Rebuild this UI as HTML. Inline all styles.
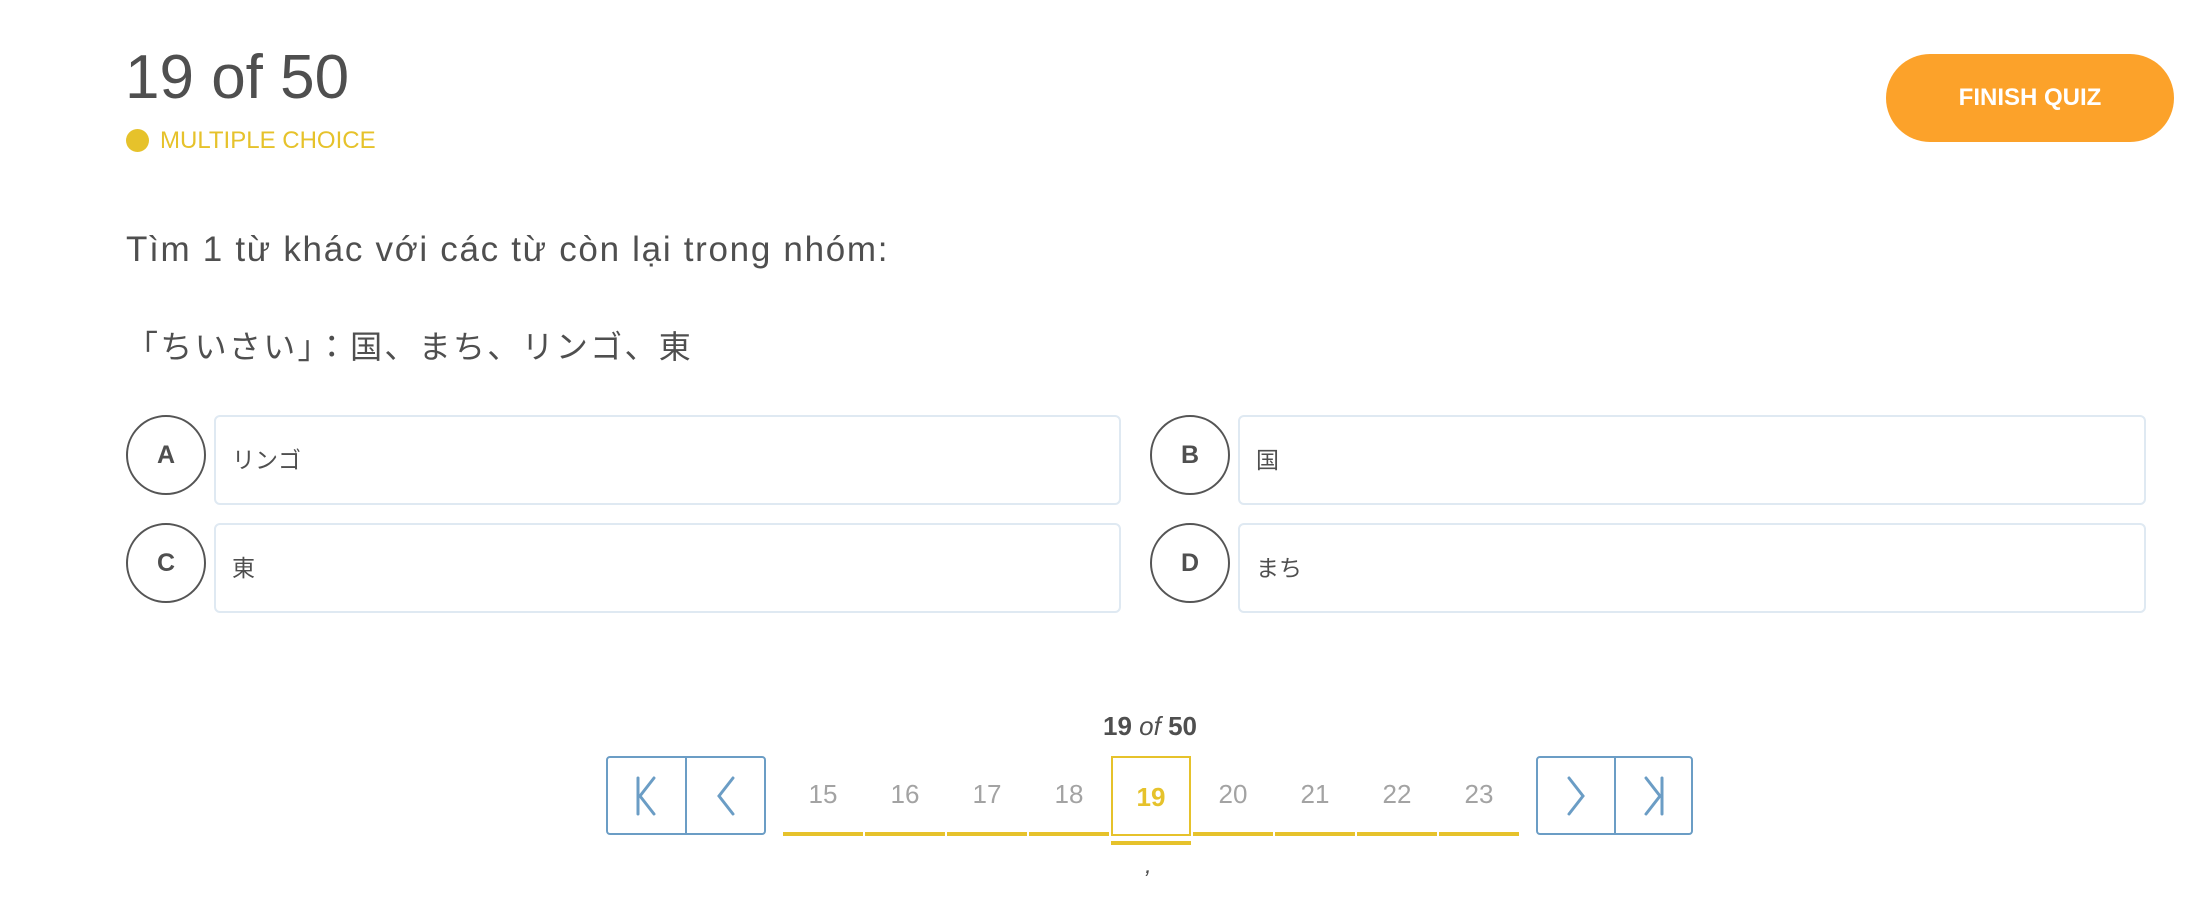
<!DOCTYPE html>
<html><head><meta charset="utf-8"><style>
*{margin:0;padding:0;box-sizing:border-box}
body{width:2195px;height:912px;background:#fff;position:relative;overflow:hidden;font-family:"Liberation Sans","Noto Sans CJK JP",sans-serif;color:#555}
.a{position:absolute}
.title{left:125px;top:42px;font-size:62px;line-height:72px;color:#4f4f4f}
.dot{left:126px;top:129px;width:23px;height:23px;border-radius:50%;background:#e6c22b}
.mc{left:160px;top:128px;font-size:24px;line-height:26px;color:#e6c22b}
.btn{left:1886px;top:54px;width:288px;height:88px;border-radius:44px;background:#fca22a;color:#fff;font-weight:bold;font-size:24px;line-height:88px;text-align:center}
.q{left:126px;top:230px;font-size:35px;line-height:40px;color:#4f4f4f;letter-spacing:1.7px}
.jp{left:126px;top:327px;font-size:32px;line-height:40px;color:#4f4f4f;letter-spacing:2.3px}
.circ{width:80px;height:80px;border:2px solid #555;border-radius:50%;text-align:center;line-height:76px;font-weight:bold;font-size:25px;color:#4f4f4f}
.box{height:90px;border:2px solid #dfe9f2;border-radius:6px;font-size:23px;line-height:86px;padding-left:16px;color:#4f4f4f}
.navb{border:2px solid #6b9dc5;border-radius:4px;height:79px;display:flex}
.navb div{flex:1;display:flex;align-items:center;justify-content:center}
.cell{width:80px;height:76px;text-align:center;line-height:76px;font-size:26px;color:#a3a3a3}
.ul{height:4px;background:#e6c22b;width:80px}
</style></head><body>
<div class="a title">19 of 50</div>
<div class="a dot"></div>
<div class="a mc">MULTIPLE CHOICE</div>
<div class="a btn">FINISH QUIZ</div>
<div class="a q">Tìm 1 từ khác với các từ còn lại trong nhóm:</div>
<div class="a jp">「ちいさい」：国、まち、リンゴ、東</div>

<div class="a circ" style="left:126px;top:415px">A</div>
<div class="a box" style="left:214px;top:415px;width:907px">リンゴ</div>
<div class="a circ" style="left:1150px;top:415px">B</div>
<div class="a box" style="left:1238px;top:415px;width:908px">国</div>
<div class="a circ" style="left:126px;top:523px">C</div>
<div class="a box" style="left:214px;top:523px;width:907px">東</div>
<div class="a circ" style="left:1150px;top:523px">D</div>
<div class="a box" style="left:1238px;top:523px;width:908px">まち</div>

<div class="a" style="left:1000px;top:711px;width:300px;text-align:center;font-size:26px;line-height:30px;font-weight:bold;color:#4f4f4f">19 <i style="font-weight:normal">of</i> 50</div>

<div class="a navb" style="left:606px;top:756px;width:160px">
<div style="border-right:2px solid #6b9dc5"><svg width="30" height="44" viewBox="0 0 30 44"><path d="M6 4V40M22 4L8 22L22 40" fill="none" stroke="#6b9dc5" stroke-width="3" stroke-linecap="round"/></svg></div>
<div><svg width="30" height="44" viewBox="0 0 30 44"><path d="M22 4L8 22L22 40" fill="none" stroke="#6b9dc5" stroke-width="3" stroke-linecap="round"/></svg></div>
</div>
<div class="a navb" style="left:1536px;top:756px;width:157px">
<div style="border-right:2px solid #6b9dc5"><svg width="30" height="44" viewBox="0 0 30 44"><path d="M8 4L22 22L8 40" fill="none" stroke="#6b9dc5" stroke-width="3" stroke-linecap="round"/></svg></div>
<div><svg width="30" height="44" viewBox="0 0 30 44"><path d="M24 4V40M8 4L22 22L8 40" fill="none" stroke="#6b9dc5" stroke-width="3" stroke-linecap="round"/></svg></div>
</div>

<div class="a" style="left:783px;top:756px;display:flex">
<div><div class="cell">15</div><div class="ul"></div></div>
<div style="margin-left:2px"><div class="cell">16</div><div class="ul"></div></div>
<div style="margin-left:2px"><div class="cell">17</div><div class="ul"></div></div>
<div style="margin-left:2px"><div class="cell">18</div><div class="ul"></div></div>
<div style="margin-left:2px"><div class="cell" style="height:80px;border:2px solid #e6c22b;color:#e6c22b;font-weight:bold;line-height:78px">19</div><div class="ul" style="margin-top:5px"></div></div>
<div style="margin-left:2px"><div class="cell">20</div><div class="ul"></div></div>
<div style="margin-left:2px"><div class="cell">21</div><div class="ul"></div></div>
<div style="margin-left:2px"><div class="cell">22</div><div class="ul"></div></div>
<div style="margin-left:2px"><div class="cell">23</div><div class="ul"></div></div>
</div>
<div class="a" style="left:1145px;top:852px;font-size:24px;font-style:italic;color:#4f4f4f">,</div>
</body></html>
